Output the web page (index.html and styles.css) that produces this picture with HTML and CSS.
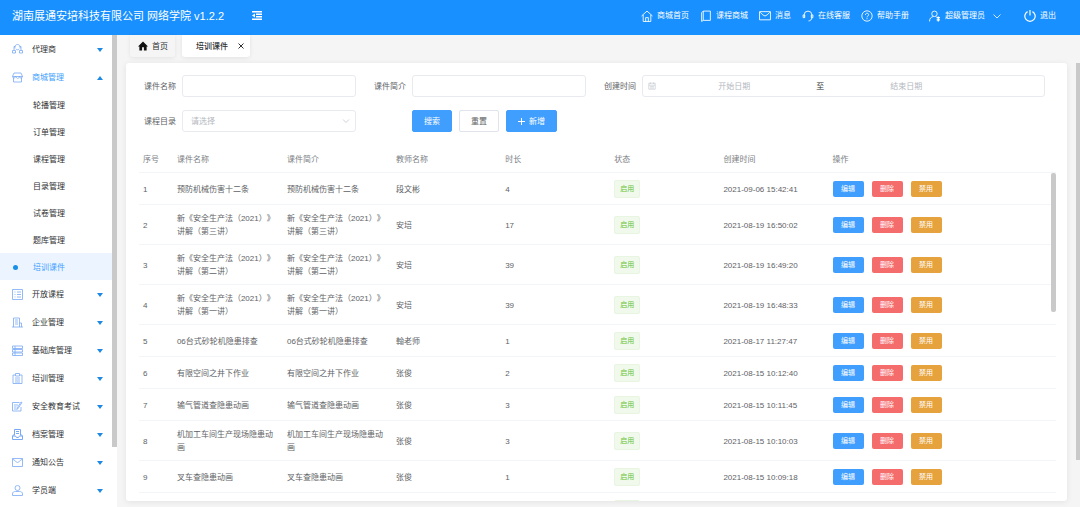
FILE: index.html
```html
<!DOCTYPE html>
<html lang="zh-CN">
<head>
<meta charset="utf-8">
<meta name="viewport" content="width=device-width, initial-scale=1">
<title>培训课件</title>
<link rel="stylesheet" href="styles.css">
</head>
<body>
<header class="topbar">
  <h1 class="brand">湖南展通安培科技有限公司 网络学院 v1.2.2</h1>
  <button class="fold" type="button" aria-label="折叠菜单"><svg viewBox="0 0 20 18"><path d="M0 1.500h20M8 6.500h12M8 11.500h12M0 16.500h20" stroke-width="2.800"/><path d="M0 9l6-4v8z" fill="currentColor" stroke="none"/></svg></button>
  <nav class="topnav">
    <a href="#"><svg class="icon" viewBox="0 0 22 22"><path d="M1 11L11 2l10 9M4 9v12h14V9M8.500 21v-7h5v7"/></svg>商城首页</a>
    <a href="#"><svg class="icon" viewBox="0 0 22 22"><path d="M6 2h13v17H6zM6 2L3 5v16l3-2"/></svg>课程商城</a>
    <a href="#"><svg class="icon" viewBox="0 0 22 22"><path d="M1 3h20v15H1zM2 4l5 5 4 2 4-2 5-5"/></svg>消息</a>
    <a href="#"><svg class="icon" viewBox="0 0 22 22"><path d="M4 14V9a7 7 0 0 1 14 0v5M4 9H2v5h3V9zM18 9h2v5h-3V9zM18 14c0 4-3 6-6 6"/></svg>在线客服</a>
    <a href="#"><svg class="icon" viewBox="0 0 22 22"><circle cx="11" cy="11" r="9.500"/><path d="M8 9c0-4 6-4 6-.5 0 2.500-3 2.500-3 5M11 15v2"/></svg>帮助手册</a>
    <a href="#" class="user"><svg class="icon" viewBox="0 0 22 22"><circle cx="10" cy="7" r="5"/><path d="M1 21c0-6 3-8 7-9M13 12l2 2"/><path d="M17 12v9M14 14h6M14 18h6" stroke-width="2.500"/></svg>超级管理员<svg class="chevron" viewBox="0 0 16 16"><path d="M1 5l7 7 7-7"/></svg></a>
    <a href="#" class="logout"><svg class="icon" viewBox="0 0 22 22"><path d="M6.500 3a9.500 9.500 0 1 0 9 0M11 0v10" stroke-width="2.200"/></svg>退出</a>
  </nav>
</header>
<div class="shell">
  <aside class="sidebar">
    <nav class="menu">
      <button class="group" type="button"><svg class="icon" viewBox="0 0 22 22"><path d="M6 9C4 4 8 1 11 1s7 3 5 8M7 5H4v7M15 5h3v7M1 18v-5h6v5zM15 18v-5h6v5zM8 10c2 2 4 2 6 0"/></svg><span>代理商</span><i class="caret"></i></button>
      <button class="group open" type="button"><svg class="icon" viewBox="0 0 22 22"><path d="M4 2h14l3 7H1zM3 11v9h16v-9M1 9c0 4 6 4 6 0h1c1 5 6 5 7 0 0 4 6 4 6 0"/></svg><span>商城管理</span><i class="caret up"></i></button>
      <a class="leaf" href="#">轮播管理</a>
      <a class="leaf" href="#">订单管理</a>
      <a class="leaf" href="#">课程管理</a>
      <a class="leaf" href="#">目录管理</a>
      <a class="leaf" href="#">试卷管理</a>
      <a class="leaf" href="#">题库管理</a>
      <a class="leaf current" href="#"><i class="dot"></i>培训课件</a>
      <button class="group" type="button"><svg class="icon" viewBox="0 0 22 22"><path d="M1 1h20v20H1zM5 6h2M10 6h8M5 11h2M10 11h8M5 16h2M10 16h8"/></svg><span>开放课程</span><i class="caret"></i></button>
      <button class="group" type="button"><svg class="icon" viewBox="0 0 22 22"><path d="M3 20V2h12v18M15 12h4v8M0 20h22M6 6h6M6 10h6M6 14h6"/></svg><span>企业管理</span><i class="caret"></i></button>
      <button class="group" type="button"><svg class="icon" viewBox="0 0 22 22"><path d="M1 2h20v5H1zM1 9h20v5H1zM1 16h20v5H1zM6 2v19"/></svg><span>基础库管理</span><i class="caret"></i></button>
      <button class="group" type="button"><svg class="icon" viewBox="0 0 22 22"><path d="M7 4H2v17h18V4h-5M7 1h8v5H7zM6 10h10M6 14h10M6 18h10"/></svg><span>培训管理</span><i class="caret"></i></button>
      <button class="group" type="button"><svg class="icon" viewBox="0 0 22 22"><path d="M18 12v8H1V3h14M4 8h8M4 12h5M4 16h5M20 3l-8 12-2 2 1-4 7-11z"/></svg><span>安全教育考试</span><i class="caret"></i></button>
      <button class="group" type="button"><svg class="icon" viewBox="0 0 22 22"><path d="M5 13V1h12v12M5 10l-4 4v7h20v-7l-4-4M1 14h6l2 3h4l2-3h6M8 5h6M8 9h6" stroke-width="2"/></svg><span>档案管理</span><i class="caret"></i></button>
      <button class="group" type="button"><svg class="icon" viewBox="0 0 22 22"><path d="M1 3h20v16H1zM1 4l6 4 4 4 4-4 6-4"/></svg><span>通知公告</span><i class="caret"></i></button>
      <button class="group" type="button"><svg class="icon" viewBox="0 0 22 22"><circle cx="11" cy="6" r="5"/><path d="M1 21v-3c0-4 3-5 6-5h8c3 0 6 1 6 5v3z"/></svg><span>学员端</span><i class="caret"></i></button>
    </nav>
    <div class="thumb side-thumb"></div>
  </aside>
  <main class="main">
    <div class="tabs">
      <a class="tab" href="#"><svg class="home" viewBox="0 0 22 22"><path d="M11 1L0 12h3v9h6v-7h4v7h6v-9h3z"/></svg>首页</a>
      <div class="tab active"><span>培训课件</span><button class="close" type="button" aria-label="关闭"><svg viewBox="0 0 12 12"><path d="M1 1l10 10M11 1L1 11"/></svg></button></div>
    </div>
    <section class="card">
      <form class="filters">
        <div class="field"><label for="name">课件名称</label><input class="box" id="name" type="text"></div>
        <div class="field"><label for="intro">课件简介</label><input class="box" id="intro" type="text"></div>
        <div class="field"><label for="start">创建时间</label>
          <div class="box range"><svg class="cal" viewBox="0 0 20 20"><path d="M2 3h16v15H2zM2 8h16M6 1v4M14 1v4M5 11.500h10M5 15h10"/></svg><input id="start" type="text" placeholder="开始日期"><span>至</span><input type="text" placeholder="结束日期" aria-label="结束日期"></div>
        </div>
        <div class="field"><label for="catalog">课程目录</label>
          <div class="picker"><select class="box" id="catalog"><option>请选择</option></select><svg class="arrow" viewBox="0 0 16 16"><path d="M2 5l6 6 6-6"/></svg></div>
        </div>
        <div class="actions">
          <button class="btn primary" type="button">搜索</button>
          <button class="btn" type="button">重置</button>
          <button class="btn primary" type="button"><svg class="plus" viewBox="0 0 14 14"><path d="M7 0v14M0 7h14"/></svg>新增</button>
        </div>
      </form>
      <div class="table-wrap">
        <table class="grid">
          <colgroup><col class="c-no"><col class="c-name"><col class="c-mid"><col class="c-mid"><col class="c-mid"><col class="c-mid"><col class="c-mid"><col></colgroup>
          <thead><tr><th>序号</th><th>课件名称</th><th>课件简介</th><th>教师名称</th><th>时长</th><th>状态</th><th>创建时间</th><th>操作</th></tr></thead>
          <tbody>
            <tr><td>1</td><td>预防机械伤害十二条</td><td>预防机械伤害十二条</td><td>段文彬</td><td>4</td><td><span class="tag">启用</span></td><td>2021-09-06 15:42:41</td><td><div class="ops"><button class="op edit">编辑</button><button class="op del">删除</button><button class="op ban">禁用</button></div></td></tr>
            <tr><td>2</td><td>新《安全生产法（2021）》讲解（第三讲）</td><td>新《安全生产法（2021）》讲解（第三讲）</td><td>安培</td><td>17</td><td><span class="tag">启用</span></td><td>2021-08-19 16:50:02</td><td><div class="ops"><button class="op edit">编辑</button><button class="op del">删除</button><button class="op ban">禁用</button></div></td></tr>
            <tr><td>3</td><td>新《安全生产法（2021）》讲解（第二讲）</td><td>新《安全生产法（2021）》讲解（第二讲）</td><td>安培</td><td>39</td><td><span class="tag">启用</span></td><td>2021-08-19 16:49:20</td><td><div class="ops"><button class="op edit">编辑</button><button class="op del">删除</button><button class="op ban">禁用</button></div></td></tr>
            <tr><td>4</td><td>新《安全生产法（2021）》讲解（第一讲）</td><td>新《安全生产法（2021）》讲解（第一讲）</td><td>安培</td><td>39</td><td><span class="tag">启用</span></td><td>2021-08-19 16:48:33</td><td><div class="ops"><button class="op edit">编辑</button><button class="op del">删除</button><button class="op ban">禁用</button></div></td></tr>
            <tr><td>5</td><td>06台式砂轮机隐患排查</td><td>06台式砂轮机隐患排查</td><td>翰老师</td><td>1</td><td><span class="tag">启用</span></td><td>2021-08-17 11:27:47</td><td><div class="ops"><button class="op edit">编辑</button><button class="op del">删除</button><button class="op ban">禁用</button></div></td></tr>
            <tr><td>6</td><td>有限空间之井下作业</td><td>有限空间之井下作业</td><td>张俊</td><td>2</td><td><span class="tag">启用</span></td><td>2021-08-15 10:12:40</td><td><div class="ops"><button class="op edit">编辑</button><button class="op del">删除</button><button class="op ban">禁用</button></div></td></tr>
            <tr><td>7</td><td>输气管道查隐患动画</td><td>输气管道查隐患动画</td><td>张俊</td><td>3</td><td><span class="tag">启用</span></td><td>2021-08-15 10:11:45</td><td><div class="ops"><button class="op edit">编辑</button><button class="op del">删除</button><button class="op ban">禁用</button></div></td></tr>
            <tr><td>8</td><td>机加工车间生产现场隐患动画</td><td>机加工车间生产现场隐患动画</td><td>张俊</td><td>3</td><td><span class="tag">启用</span></td><td>2021-08-15 10:10:03</td><td><div class="ops"><button class="op edit">编辑</button><button class="op del">删除</button><button class="op ban">禁用</button></div></td></tr>
            <tr><td>9</td><td>叉车查隐患动画</td><td>叉车查隐患动画</td><td>张俊</td><td>1</td><td><span class="tag">启用</span></td><td>2021-08-15 10:09:18</td><td><div class="ops"><button class="op edit">编辑</button><button class="op del">删除</button><button class="op ban">禁用</button></div></td></tr>
            <tr><td></td><td></td><td></td><td></td><td></td><td><span class="tag"></span></td><td></td><td></td></tr>
          </tbody>
        </table>
        <div class="thumb table-thumb"></div>
      </div>
    </section>
    <div class="thumb page-thumb"></div>
  </main>
</div>
</body>
</html>
```
FILE: styles.css
```css
* { box-sizing: border-box; }
body {
  margin: 0;
  height: 100vh;
  display: flex;
  flex-direction: column;
  overflow: hidden;
  font-family: "Liberation Sans", "Noto Sans CJK SC", sans-serif;
  font-size: 8px;
  line-height: 13px;
  color: #606266;
  background: #f5f5f6;
  text-spacing-trim: space-all;
}
button, input, select { font: inherit; color: inherit; margin: 0; }
button { padding: 0; border: 0; background: none; cursor: pointer; }
a { color: inherit; text-decoration: none; }
svg { fill: none; stroke: currentColor; stroke-width: 1.6; flex: none; }
.icon { width: 11px; height: 11px; }

/* Top bar */
.topbar {
  flex: none;
  height: 35px;
  display: flex;
  align-items: center;
  padding: 0 24px 4px 12px;
  background: #1890ff;
  color: #fff;
}
.brand { margin: 0; font-size: 11px; line-height: 16px; font-weight: 400; white-space: nowrap; }
.fold { margin-left: 28px; display: flex; }
.fold svg { width: 10px; height: 9px; }
.topnav { margin-left: auto; display: flex; align-items: center; gap: 11px; white-space: nowrap; }
.topnav a { display: flex; align-items: center; gap: 4px; }
.topnav .user { margin-left: 9px; }
.topnav .logout { margin-left: 12px; }
.topnav .icon { width: 12px; height: 12px; }
.chevron { width: 8px; height: 8px; margin-left: 4px; }

.shell { flex: 1; min-height: 0; display: flex; }

/* Side menu */
.sidebar { position: relative; flex: none; width: 117px; overflow: hidden; background: #fff; }
.menu { display: flex; flex-direction: column; margin-right: 5px; color: #303133; }
.group {
  flex: none;
  height: 28px;
  display: flex;
  align-items: center;
  gap: 9px;
  padding: 1px 9px 0 12px;
  text-align: left;
}
.group span { flex: 1; }
.group .icon { color: #78a9f5; }
.group.open { color: #409eff; }
.caret { border: 3px solid transparent; border-top: 4px solid #1e88e5; border-bottom: 0; }
.caret.up { border-top: 0; border-bottom: 4px solid #1e88e5; }
.leaf { position: relative; flex: none; height: 27px; display: flex; align-items: center; padding: 1px 0 0 33px; }
.leaf.current { background: #ecf5ff; color: #409eff; }
.dot { position: absolute; left: 13px; width: 5px; height: 5px; border-radius: 50%; background: #1890e8; }

.thumb { position: absolute; background: #c9c9ca; }
.side-thumb { right: 0; top: 0; width: 5px; height: 412px; }
.page-thumb { right: 0; top: 28px; width: 4px; height: 397px; }
.table-thumb { right: 0; top: 28px; width: 5px; height: 139px; border-radius: 2px; }

/* Content */
.main {
  position: relative;
  flex: 1;
  min-width: 0;
  display: flex;
  flex-direction: column;
  gap: 6px;
  padding: 0 13px 6px 9px;
}
.tabs { flex: none; display: flex; gap: 7px; padding-left: 4px; color: #303133; }
.tab {
  height: 22px;
  display: flex;
  align-items: center;
  padding: 0 7px 0 8px;
  gap: 4px;
  border-radius: 0 0 3px 3px;
  box-shadow: 0 1px 4px rgba(0, 0, 0, .08);
}
.tab.active { gap: 10px; padding: 0 6px 0 14px; background: #fff; font-weight: 500; }
.home { width: 10px; height: 10px; fill: #111; stroke: none; }
.close { display: flex; }
.close svg { width: 6px; height: 6px; stroke-width: 2; }
.card {
  flex: 1;
  min-height: 0;
  display: flex;
  flex-direction: column;
  gap: 13px;
  padding: 12px 11px 0 13px;
  background: #fff;
  border-radius: 3px;
  box-shadow: 0 1px 6px rgba(0, 0, 0, .08);
}

/* Filters */
.filters {
  flex: none;
  display: grid;
  grid-template-columns: 212fr 212fr 441fr;
  gap: 13px 18px;
  padding: 0 11px 0 5px;
}
.field { display: flex; align-items: center; min-width: 0; }
.field label { flex: none; width: 38px; }
.box {
  flex: 1;
  width: 100%;
  min-width: 0;
  height: 22px;
  padding: 0 8px;
  border: 1px solid #e8eaf0;
  border-radius: 3px;
  background: #fff;
}
.picker { position: relative; flex: 1; display: flex; }
.picker select { appearance: none; color: #b4b8c0; }
.arrow { position: absolute; right: 6px; top: 7px; width: 8px; height: 8px; color: #c0c4cc; }
.range { display: flex; align-items: center; padding: 0 5px; }
.range input { flex: 0 0 40%; min-width: 0; padding: 0; border: 0; background: none; text-align: center; }
.range span { flex: 0 0 4%; text-align: center; color: #303133; }
.cal { width: 8px; height: 8px; color: #c0c4cc; }
::placeholder { color: #b4b8c0; opacity: 1; }
.actions { display: flex; gap: 7px; padding-left: 38px; }
.btn {
  height: 22px;
  display: flex;
  align-items: center;
  gap: 4px;
  padding: 0 11px;
  border: 1px solid #e0e3e9;
  border-radius: 2px;
  background: #fff;
  white-space: nowrap;
}
.btn.primary { border-color: #409eff; background: #409eff; color: #fff; }
.plus { width: 7px; height: 7px; stroke-width: 2; }

/* Table */
.table-wrap { position: relative; flex: 1; min-height: 0; overflow: hidden; }
.grid { width: 100%; table-layout: fixed; border-collapse: separate; border-spacing: 0; }
.c-no { width: 3.7%; }
.c-name { width: 12%; }
.c-mid { width: 11.9%; }
.grid th, .grid td { padding: 7px 4px 6px; border-bottom: 1px solid #f3f5f9; text-align: left; font-weight: 400; }
.grid th { height: 28px; padding-top: 8px; color: #7c7f85; }
.grid td { height: 32px; }
.grid td:nth-child(6), .grid td:nth-child(8) { padding: 6px 4px; }
.tag {
  display: block;
  width: 26px;
  height: 18px;
  border: 1px solid #e8f6e1;
  border-radius: 2px;
  background: #f0f9eb;
  color: #67c23a;
  font-size: 7px;
  line-height: 16px;
  text-align: center;
}
.ops { display: flex; gap: 8px; }
.op { width: 31px; height: 16px; border-radius: 2px; color: #fff; font-size: 7px; line-height: 16px; }
.edit { background: #409eff; }
.del { background: #f56c6c; }
.ban { background: #e6a23c; }
```
